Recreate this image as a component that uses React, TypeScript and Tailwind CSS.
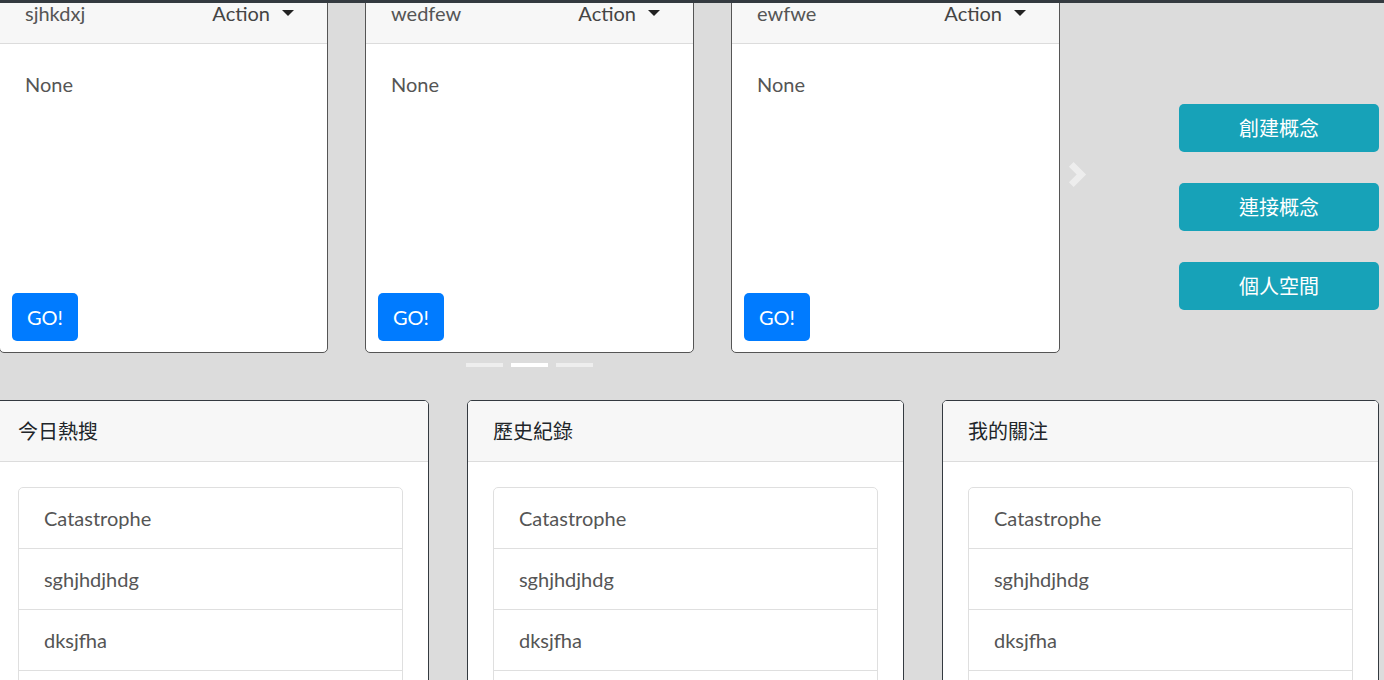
import React from "react";

const font = { fontFamily: '"Segoe UI", Lato, "Noto Sans CJK TC", sans-serif' };

const concepts = ["sjhkdxj", "wedfew", "ewfwe"];
const panels = ["今日熱搜", "歷史紀錄", "我的關注"];
const items = ["Catastrophe", "sghjhdjhdg", "dksjfha", "\u00a0"];
const actions = ["創建概念", "連接概念", "個人空間"];

const ConceptCard: React.FC<{ title: string }> = ({ title }) => (
  <div className="w-[329px] h-[371px] shrink-0 bg-white border border-[#555] rounded-[5px] flex flex-col overflow-hidden">
    <div className="h-[61px] px-[25px] py-[15px] bg-[#f7f7f7] border-b border-[#dcdcdc] flex items-center justify-between">
      <span className="text-[20px] leading-[30px] text-[#555]">{title}</span>
      <button className="flex items-center gap-[12px] pr-[8px] text-[20px] leading-[30px] text-[#444]">
        Action
        <span className="w-0 h-0 border-l-[6px] border-r-[6px] border-t-[6px] border-l-transparent border-r-transparent border-t-[#222]" />
      </button>
    </div>
    <div className="flex-1 flex flex-col justify-between pt-[25px] pb-[11px]">
      <p className="px-[25px] text-[20px] leading-[30px] text-[#555]">None</p>
      <div className="px-[12px]">
        <button className="h-[48px] px-[15px] rounded-[5px] bg-[#007bff] text-white text-[20px] leading-[30px]">
          GO!
        </button>
      </div>
    </div>
  </div>
);

const ListCard: React.FC<{ title: string }> = ({ title }) => (
  <div className="w-[437px] shrink-0 bg-white border border-[#343a40] rounded-[5px] overflow-hidden">
    <div className="h-[61px] px-[25px] py-[15px] bg-[#f7f7f7] border-b border-[#dcdcdc]">
      <span className="text-[20px] leading-[30px] text-[#212529]">{title}</span>
    </div>
    <div className="p-[25px]">
      <ul className="border border-[#dfdfdf] rounded-[5px]">
        {items.map((item, i) => (
          <li
            key={i}
            className={`px-[25px] py-[15px] text-[20px] leading-[30px] text-[#555] ${i > 0 ? "border-t border-[#dfdfdf]" : ""}`}
          >
            {item}
          </li>
        ))}
      </ul>
    </div>
  </div>
);

export default function App() {
  return (
    <div className="relative w-[1384px] h-[680px] overflow-hidden bg-[#dcdcdc]" style={font}>
      <div className="absolute top-0 left-0 right-0 h-[3px] bg-[#343a40] z-10" />

      {/* Carousel + actions */}
      <div className="flex mt-[-18px] ml-[-1px]">
        <div className="relative w-[1061px] shrink-0">
          <div className="flex gap-[37px]">
            {concepts.map((c) => (
              <ConceptCard key={c} title={c} />
            ))}
          </div>
          <div className="flex justify-center gap-[8px] mt-[10px]">
            <span className="w-[37px] h-[4px] bg-white opacity-50" />
            <span className="w-[37px] h-[4px] bg-white" />
            <span className="w-[37px] h-[4px] bg-white opacity-50" />
          </div>
          <svg
            className="absolute left-[1066px] top-[180px] opacity-50"
            width="25"
            height="25"
            viewBox="0 0 8 8"
            fill="#fff"
          >
            <path d="M2.75 0l-1.5 1.5L3.75 4l-2.5 2.5L2.75 8l4-4-4-4z" />
          </svg>
        </div>
        <div className="ml-[119px] pt-[122px] flex flex-col gap-[31px]">
          {actions.map((a) => (
            <button
              key={a}
              className="w-[200px] h-[48px] rounded-[5px] bg-[#17a2b8] text-white text-[20px] leading-[30px]"
            >
              {a}
            </button>
          ))}
        </div>
      </div>

      {/* Panels */}
      <div className="flex gap-[38px] ml-[-8px] mt-[33px]">
        {panels.map((p) => (
          <ListCard key={p} title={p} />
        ))}
      </div>
    </div>
  );
}
